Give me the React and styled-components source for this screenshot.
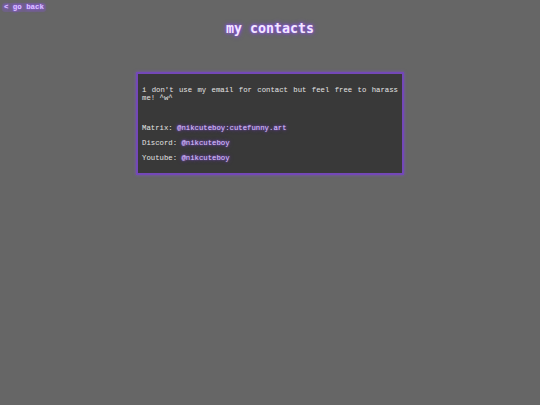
import React from "react";
import styled, { createGlobalStyle } from "styled-components";

const PURPLE = "#7448b8";
const LINK = "#dcc4ff";

const GlobalStyle = createGlobalStyle`
  html, body {
    margin: 0;
    padding: 0;
    background: #666666;
  }
  body {
    font-family: "Liberation Mono", "DejaVu Sans Mono", monospace;
    color: #e4e4e4;
  }
`;

const Page = styled.div`
  min-height: 405px;
  display: flex;
  flex-direction: column;
  align-items: center;
  padding-top: 3px;
`;

const BackLink = styled.a`
  align-self: flex-start;
  margin-left: 2px;
  font-size: 7.4px;
  line-height: 9px;
  padding: 0 2px;
  font-weight: bold;
  color: ${LINK};
  text-decoration: none;
  text-shadow: 0 0 2px #9b5cff, 0 0 4px #8a4ff0;
  background: rgba(130, 90, 200, 0.3);
  border-radius: 3px;
`;

const Title = styled.h1`
  margin: 9px 0 0;
  font-family: "DejaVu Sans Mono", monospace;
  font-size: 13.3px;
  line-height: 16px;
  font-weight: bold;
  color: #f3e6ff;
  text-shadow: 0 0 3px #9b5cff, 0 0 5px #7a3fe0;
`;

const Card = styled.div`
  box-sizing: border-box;
  width: 268px;
  margin-top: 35px;
  padding: 3px 4px 11px 4px;
  background: #393939;
  border: 2px solid ${PURPLE};
  box-shadow: 0 0 3px rgba(130, 80, 210, 0.8);
  font-size: 7.3px;
  line-height: 8px;
`;

const Para = styled.p`
  margin: ${(p) => p.$gap || "7px"} 0 0;
  text-align: ${(p) => (p.$justify ? "justify" : "left")};
`;

const Handle = styled.span`
  color: ${LINK};
  text-shadow: 0 0 2px rgba(155, 92, 255, 0.9), 0 0 4px rgba(130, 70, 230, 0.7);
`;

const contacts = [
  { label: "Matrix", handle: "@nikcuteboy:cutefunny.art" },
  { label: "Discord", handle: "@nikcuteboy" },
  { label: "Youtube", handle: "@nikcuteboy" },
];

export default function App() {
  return (
    <>
      <GlobalStyle />
      <Page>
        <BackLink href="#">&lt; go back</BackLink>
        <Title>my contacts</Title>
        <Card>
          <Para $justify $gap="9px">
            i don't use my email for contact but feel free to harass me! ^w^
          </Para>
          <Para $gap="14px">&nbsp;</Para>
          {contacts.map((c, i) => (
            <Para key={c.label} $gap={i === 0 ? "0px" : "7px"}>
              {c.label}: <Handle>{c.handle}</Handle>
            </Para>
          ))}
        </Card>
      </Page>
    </>
  );
}
